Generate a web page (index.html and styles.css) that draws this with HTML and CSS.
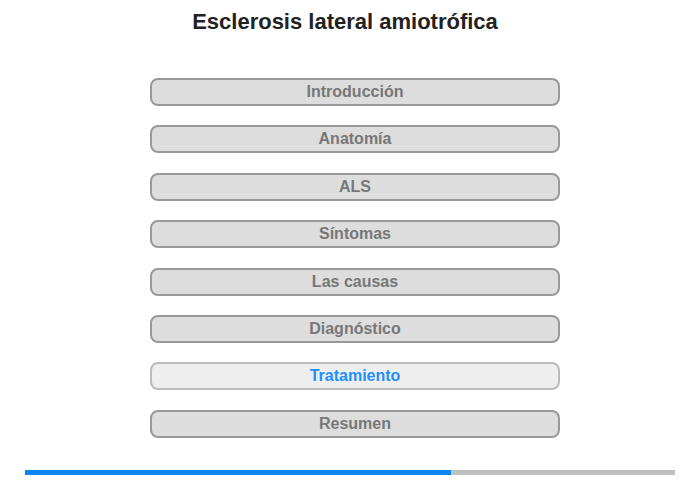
FILE: index.html
```html
<!DOCTYPE html>
<html lang="es">
<head>
    <meta charset="UTF-8">
    <meta name="viewport" content="width=device-width, initial-scale=1.0">
    <title>Esclerosis lateral amiotrófica</title>
    <link rel="stylesheet" href="styles.css">
</head>
<body>
    <h1 class="title">Esclerosis lateral amiotrófica</h1>
    <div class="menu">
        <div class="item">Introducción</div>
        <div class="item">Anatomía</div>
        <div class="item">ALS</div>
        <div class="item">Síntomas</div>
        <div class="item">Las causas</div>
        <div class="item">Diagnóstico</div>
        <div class="item active">Tratamiento</div>
        <div class="item">Resumen</div>
    </div>
    <div class="progress">
        <div class="progress-fill" style="width: 65.6%"></div>
    </div>
</body>
</html>
```

FILE: styles.css
```css
body {
    margin: 0;
    font-family: "Liberation Sans", Arial, sans-serif;
    background: #fff;
}
.title {
    margin: 0;
    padding-top: 9px;
    height: 78px;
    box-sizing: border-box;
    text-align: center;
    font-size: 22px;
    line-height: 26px;
    color: #222;
    padding-right: 10px;
}
.menu {
    display: flex;
    flex-direction: column;
    gap: 19.4px;
    width: 410px;
    margin-left: 150px;
}
.item {
    box-sizing: border-box;
    height: 28px;
    border: 2px solid #999;
    border-radius: 8px;
    background: #ddd;
    color: #777;
    font-size: 16px;
    font-weight: bold;
    text-align: center;
    line-height: 24px;
}
.item.active {
    background: #eee;
    border-color: #bbb;
    color: #1e90ff;
}
.progress {
    margin: 32px 25px 0;
    height: 5px;
    background: #c0c0c0;
}
.progress-fill {
    height: 100%;
    background: #0984f0;
}
```
